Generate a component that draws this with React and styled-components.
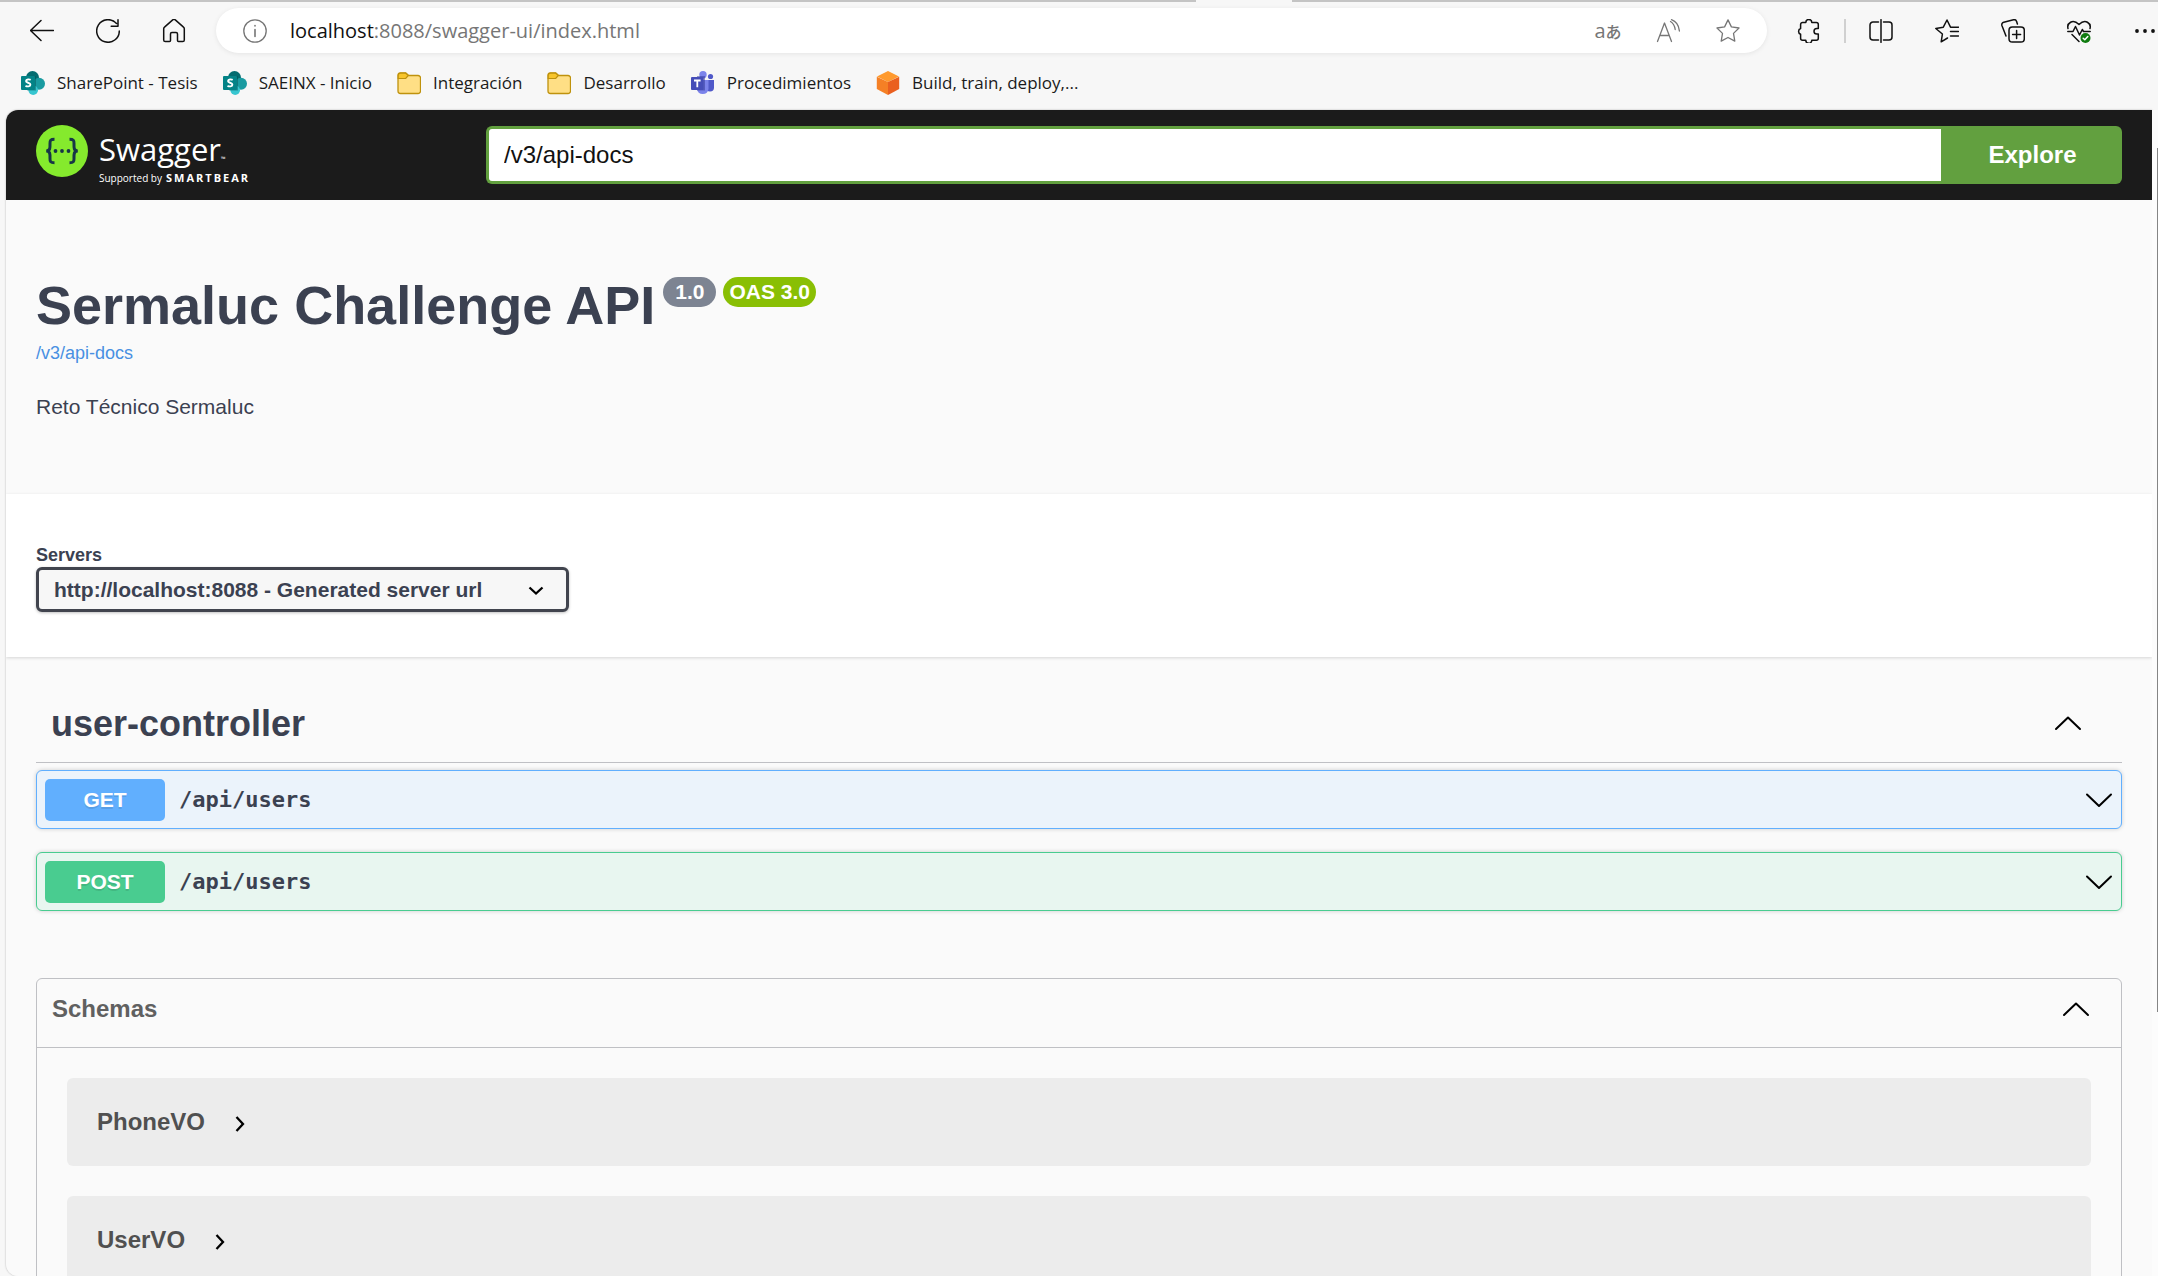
import React, { useState } from "react";
import styled, { createGlobalStyle } from "styled-components";

const UI = `"Open Sans", "Noto Sans", sans-serif`;
const SANS = `"Liberation Sans", Arial, sans-serif`;
const MONO = `"DejaVu Sans Mono", monospace`;

const GlobalStyle = createGlobalStyle`
  *, *::before, *::after { box-sizing: border-box; }
  body { margin: 0; background: #f7f7f7; }
  button { border: 0; background: none; padding: 0; font: inherit; color: inherit; cursor: pointer; }
  h1, h2, p { margin: 0; }
`;

const Browser = styled.div`
  display: flex;
  flex-direction: column;
  height: 100vh;
  overflow: hidden;
  background: #f7f7f7;
  font-family: ${UI};
`;

const TabEdge = styled.div`
  display: flex;
  flex: none;
  height: 2px;
`;

const EdgeLine = styled.div`
  flex: ${(p) => p.$grow} 1 0;
  background: #c4c4c4;
`;

const ActiveTabGap = styled.div`
  flex: none;
  width: 96px;
`;

const Toolbar = styled.div`
  display: flex;
  align-items: center;
  flex: none;
  gap: 22px;
  height: 57px;
  padding-left: 22px;
`;

const IconGroup = styled.div`
  display: flex;
  align-items: center;
  flex: none;
  gap: ${(p) => p.$gap}px;
  margin-right: ${(p) => (p.$bleed ? "-7px" : "0")};
`;

const IconButton = styled.button`
  display: flex;
  align-items: center;
  justify-content: center;
  width: 40px;
  height: 40px;
  color: ${(p) => (p.$muted ? "#767676" : "#111")};
`;

const TranslateLabel = styled.span`
  font: 20px/24px "Open Sans", "Noto Sans CJK JP", sans-serif;
`;

const Kana = styled.span`
  font: 500 16px/24px "Noto Sans CJK JP", sans-serif;
`;

const Separator = styled.span`
  width: 2px;
  height: 24px;
  margin: 0 15px;
  background: #d0d0d0;
`;

const AddressBar = styled.div`
  display: flex;
  align-items: center;
  flex: 1;
  min-width: 0;
  height: 45px;
  padding: 0 19px 0 27px;
  border-radius: 23px;
  background: #fff;
  box-shadow: 0 1px 5px rgba(0, 0, 0, 0.08);
`;

const Address = styled.div`
  flex: 1;
  min-width: 0;
  margin-left: 23px;
  overflow: hidden;
  white-space: nowrap;
  color: #767676;
  font-size: 20px;
  line-height: 28px;
  outline: 0;
`;

const Host = styled.span`
  color: #111;
`;

const Bookmarks = styled.nav`
  display: flex;
  align-items: center;
  flex: none;
  gap: 25px;
  height: 51px;
  padding: 0 21px 4px;
`;

const Bookmark = styled.a`
  display: flex;
  align-items: center;
  gap: 12px;
  color: #1b1b1b;
  font-size: 17px;
  line-height: 24px;
  text-decoration: none;
  white-space: nowrap;
`;

const Viewport = styled.div`
  display: flex;
  flex: 1;
  min-height: 0;
  padding-left: 6px;
`;

const Page = styled.div`
  flex: 1;
  min-width: 0;
  overflow-y: auto;
  scrollbar-width: none;
  border-radius: 12px 0 0 12px;
  background: #fafafa;
  box-shadow: 0 0 2px rgba(0, 0, 0, 0.3);
  color: #3b4151;
  font-family: ${SANS};
`;

const ScrollGutter = styled.div`
  display: flex;
  justify-content: flex-end;
  flex: none;
  width: 6px;
  padding: 38px 0 264px;
  background: #fcfcfc;
`;

const ScrollThumb = styled.div`
  width: 1px;
  background: #858585;
`;

const Topbar = styled.header`
  display: flex;
  align-items: center;
  height: 90px;
  padding: 0 30px;
  background: #1b1b1b;
`;

const LogoLink = styled.a`
  display: flex;
  flex: none;
  gap: 11px;
  width: 450px;
  height: 60px;
  color: #fff;
  font-family: "Open Sans", sans-serif;
  text-decoration: none;
`;

const LogoWords = styled.span`
  display: flex;
  flex-direction: column;
  padding-top: 3px;
`;

const LogoName = styled.span`
  font-size: 31px;
  line-height: 42px;
`;

const Trademark = styled.span`
  font-size: 6px;
  line-height: 6px;
`;

const LogoByline = styled.span`
  display: flex;
  align-items: center;
  gap: 4px;
  font-size: 10px;
  line-height: 16px;
`;

const Brand = styled.strong`
  font-size: 11px;
  font-weight: 700;
  letter-spacing: 2px;
`;

const SpecForm = styled.form`
  display: flex;
  flex: 1;
  height: 58px;
`;

const SpecInput = styled.input`
  flex: 1;
  min-width: 0;
  padding: 0 15px;
  border: 3px solid #62a03f;
  border-right: 0;
  border-radius: 6px 0 0 6px;
  background: #fff;
  color: #111;
  font: 24px ${SANS};
  outline: 0;
`;

const ExploreButton = styled.button`
  width: 181px;
  padding-left: 2px;
  border-radius: 0 6px 6px 0;
  background: #62a03f;
  color: #fff;
  font: bold 24px ${SANS};
`;

const Info = styled.section`
  padding: 75px 30px 72px;
`;

const TitleRow = styled.div`
  display: flex;
  align-items: flex-start;
  height: 64px;
`;

const Title = styled.h1`
  margin-right: 8px;
  font-size: 54px;
  line-height: 61px;
`;

const Version = styled.span`
  margin: 2px 7px 0 0;
  padding: 0 ${(p) => p.$pad}px;
  border-radius: 15px;
  background: ${(p) => p.$color};
  color: #fff;
  font-size: 21px;
  font-weight: bold;
  line-height: 30px;
`;

const DocsLink = styled.a`
  display: block;
  width: fit-content;
  color: #4990e2;
  font-size: 18px;
  line-height: 28px;
  text-decoration: none;
`;

const Description = styled.p`
  margin-top: 25px;
  font-size: 21px;
  line-height: 30px;
`;

const Servers = styled.section`
  display: flex;
  flex-direction: column;
  align-items: flex-start;
  gap: 2px;
  padding: 51px 30px 45px;
  background: #fff;
  box-shadow: 0 1px 3px rgba(0, 0, 0, 0.15);
`;

const ServersLabel = styled.label`
  font-size: 18px;
  font-weight: bold;
  line-height: 20px;
`;

const SelectBox = styled.div`
  display: grid;
  align-items: center;
  > * { grid-area: 1 / 1; }
  > svg { justify-self: end; margin-right: 21px; pointer-events: none; }
`;

const ServerSelect = styled.select`
  height: 45px;
  padding: 0 83px 0 15px;
  border: 3px solid #41444e;
  border-radius: 6px;
  background: #f7f7f7;
  box-shadow: 0 1px 3px rgba(0, 0, 0, 0.25);
  color: #3b4151;
  font: bold 21px ${SANS};
  appearance: none;
`;

const Operations = styled.section`
  padding: 30px 30px 67px;
`;

const TagHeader = styled.button`
  display: flex;
  align-items: flex-start;
  justify-content: space-between;
  width: 100%;
  margin-bottom: 7px;
  padding: 16px 39px 17px 15px;
  border-bottom: 1px solid #bfc0c4;
  > svg { margin-top: 6px; }
`;

const TagTitle = styled.h2`
  font-size: 36px;
  line-height: 42px;
`;

const OperationList = styled.div`
  display: flex;
  flex-direction: column;
  gap: 23px;
`;

const Operation = styled.button`
  display: flex;
  align-items: center;
  gap: 14px;
  width: 100%;
  padding: 8px 7px 7px 8px;
  border: 1px solid ${(p) => p.$color};
  border-radius: 6px;
  background: ${(p) => p.$tint};
  box-shadow: 0 0 4px rgba(0, 0, 0, 0.19);
  > svg { margin-left: auto; }
`;

const Method = styled.span`
  width: 120px;
  border-radius: 5px;
  background: ${(p) => p.$color};
  color: #fff;
  font-size: 21px;
  font-weight: bold;
  line-height: 42px;
  text-align: center;
  text-shadow: 0 2px 0 rgba(0, 0, 0, 0.1);
`;

const Path = styled.span`
  font: bold 22px/28px ${MONO};
`;

const Schemas = styled.section`
  margin: 0 30px 30px;
  border: 1px solid #bfc0c4;
  border-radius: 6px;
`;

const SchemasHeader = styled.button`
  display: flex;
  align-items: flex-start;
  justify-content: space-between;
  width: 100%;
  padding: 16px 30px 24px 15px;
  border-bottom: 1px solid #bfc0c4;
`;

const SchemasTitle = styled.h2`
  color: #606060;
  font-size: 24px;
  line-height: 28px;
`;

const Models = styled.div`
  display: flex;
  flex-direction: column;
  gap: 30px;
  padding: 30px;
`;

const Model = styled.div`
  padding: 30px;
  border-radius: 6px;
  background: #ececec;
`;

const ModelToggle = styled.button`
  display: flex;
  align-items: center;
  gap: 23px;
  color: #505050;
  font-size: 24px;
  font-weight: bold;
  line-height: 28px;
`;

const Icon = ({ size = 24, width = 1.3, children }) => (
  <svg width={size} height={size} viewBox="0 0 24 24" fill="none" stroke="currentColor" strokeWidth={width} strokeLinecap="round" strokeLinejoin="round" aria-hidden="true">
    {children}
  </svg>
);

const Chevron = ({ up }) => (
  <svg width="30" height="28" viewBox="0 0 30 28" fill="none" stroke="#000" strokeWidth="2" strokeLinecap="round" strokeLinejoin="round" aria-hidden="true">
    <path d={up ? "M3 20 15 8.500l12 11.500" : "M3 8.500l12 11.500 12-11.500"} />
  </svg>
);

const SmallChevron = ({ right }) => (
  <svg width="24" height="24" viewBox="0 0 24 24" fill="none" stroke="#000" strokeWidth="2.300" aria-hidden="true">
    <path d={right ? "M8.500 7l6.500 7-6.500 7" : "M5.500 9.500l6.500 6 6.500-6"} />
  </svg>
);

const SharePointIcon = () => (
  <svg width="24" height="24" viewBox="0 0 24 24" aria-hidden="true">
    <circle cx="11.500" cy="6.500" r="6.500" fill="#036c70" />
    <circle cx="18" cy="12.800" r="6" fill="#1a9ba1" />
    <circle cx="12.200" cy="19.200" r="4.800" fill="#37c6d0" />
    <path d="M6 5h9v14.500H6z" fill="#024e52" opacity=".45" />
    <rect y="5" width="14" height="14" rx="1" fill="#038387" />
    <path d="M9.700 8.900C8.500 8.200 5.200 8 5 10c-.1 2 4.500 1.500 4.400 3.800-.1 2-3.300 1.900-4.900 1" fill="none" stroke="#fff" strokeWidth="1.900" />
  </svg>
);

const FolderIcon = () => (
  <svg width="24" height="24" viewBox="0 0 24 24" aria-hidden="true">
    <path d="M1 4.500A2.500 2.500 0 0 1 3.500 2h5.200l3 2.500H21A2.500 2.500 0 0 1 23.500 7v13a2.500 2.500 0 0 1-2.500 2.500H3.500A2.500 2.500 0 0 1 1 20z" fill="#ffdf85" stroke="#bf920d" strokeWidth="1.300" />
    <path d="M1.200 7.500V4.500A2.300 2.300 0 0 1 3.500 2.200h5.200l2.600 2.300-2.600 3z" fill="#f8c52b" stroke="#bf920d" strokeWidth="1.200" />
  </svg>
);

const TeamsIcon = () => (
  <svg width="24" height="24" viewBox="0 0 24 24" aria-hidden="true">
    <circle cx="19.500" cy="5.500" r="2.600" fill="#5059c9" />
    <path d="M15 9h8v7.500a4 4 0 0 1-8 0z" fill="#5059c9" />
    <circle cx="12" cy="3.700" r="3.700" fill="#7b83eb" />
    <path d="M6 9h11.500v9a5.800 5.800 0 0 1-11.500 0z" fill="#7b83eb" />
    <path d="M6 5h8v14.500H6z" fill="#2f3591" opacity=".5" />
    <rect x="0" y="6" width="12.500" height="13" rx="1" fill="#464eb8" />
    <path d="M3 9.500h6.600M6.300 9.500v6.800" stroke="#fff" strokeWidth="1.800" />
  </svg>
);

const CubeIcon = () => (
  <svg width="24" height="24" viewBox="0 0 24 24" aria-hidden="true">
    <path d="M12 0 23 5.500 12 11 1 5.500z" fill="#ff9a2e" />
    <path d="M.8 5.800 12 11v13L.8 18z" fill="#f58025" />
    <path d="M23.200 5.800 12 11v13l11.200-6z" fill="#ea5f1f" />
  </svg>
);

const SwaggerMark = () => (
  <svg width="52" height="52" viewBox="0 0 52 52" aria-hidden="true">
    <circle cx="26" cy="26" r="26" fill="#85ea2d" />
    <g fill="none" stroke="#173647" strokeWidth="3">
      <path d="M18.500 14.300c-4 0-4.600 1.200-4.500 4.200.1 4.500.2 7.200-3.700 7.500 3.900.3 3.800 3 3.700 7.500-.1 3 .5 4.200 4.500 4.200" />
      <path d="M33.500 14.300c4 0 4.600 1.200 4.500 4.200-.1 4.500-.2 7.200 3.700 7.500-3.900.3-3.800 3-3.700 7.500.1 3-.5 4.200-4.500 4.200" />
    </g>
    <g fill="#173647">
      <circle cx="19.500" cy="26" r="1.900" />
      <circle cx="26" cy="26" r="1.900" />
      <circle cx="32.500" cy="26" r="1.900" />
    </g>
  </svg>
);

const bookmarks = [
  ["SharePoint - Tesis", SharePointIcon],
  ["SAEINX - Inicio", SharePointIcon],
  ["Integración", FolderIcon],
  ["Desarrollo", FolderIcon],
  ["Procedimientos", TeamsIcon],
  ["Build, train, deploy,...", CubeIcon],
];

const operations = [
  { method: "GET", path: "/api/users", color: "#61affe", tint: "#ebf3fb" },
  { method: "POST", path: "/api/users", color: "#49cc90", tint: "#e8f6f0" },
];

const STAR = "M12 .9l3.400 7 7.600 1.100-5.500 5.400 1.300 7.700-6.800-3.600-6.800 3.600 1.300-7.700L1 9l7.600-1.100z";

function BrowserChrome() {
  return (
    <>
      <TabEdge>
        <EdgeLine $grow={58} />
        <ActiveTabGap />
        <EdgeLine $grow={42} />
      </TabEdge>
      <Toolbar>
        <IconGroup $gap={26}>
          <IconButton aria-label="Back">
            <Icon width={1.500}><path d="M23.500 11.500H1M11 1.500l-10.500 10 10.500 10" /></Icon>
          </IconButton>
          <IconButton aria-label="Refresh">
            <Icon width={1.500}><path d="M20.500 4.500A11.300 11.300 0 1 0 23.300 12M22 .8v6.500h-6.800" /></Icon>
          </IconButton>
          <IconButton aria-label="Home">
            <Icon width={1.500}><path d="M1.700 9.800c0-.7.300-1.300.8-1.700l8.200-7.200c.8-.7 1.800-.7 2.600 0l8.200 7.200c.5.400.8 1 .8 1.700V21c0 .9-.7 1.600-1.600 1.600h-4.200c-.6 0-1-.4-1-1V15c0-.8-.6-1.400-1.400-1.400h-4.200c-.8 0-1.400.6-1.400 1.400v6.600c0 .6-.4 1-1 1H3.300c-.9 0-1.600-.7-1.600-1.600z" /></Icon>
          </IconButton>
        </IconGroup>
        <AddressBar>
          <Icon>
            <g stroke="#767676">
              <circle cx="12" cy="12" r="11.200" />
              <path d="M12 10.500v7M12 6.600v.3" strokeWidth="1.600" />
            </g>
          </Icon>
          <Address role="textbox" aria-label="Address" contentEditable suppressContentEditableWarning spellCheck={false}>
            <Host>localhost</Host>:8088/swagger-ui/index.html
          </Address>
          <IconGroup $gap={20}>
            <IconButton $muted aria-label="Translate">
              <TranslateLabel>a</TranslateLabel><Kana>あ</Kana>
            </IconButton>
            <IconButton $muted aria-label="Read aloud">
              <Icon><path d="M1.500 22.500 8.500 4l7 18.500M4 16.500h9M14.500 2.500c2.600 1.600 4.200 4.300 4.700 8M15.500.7c4.500 1.700 7.400 5.700 7.900 11.300" /></Icon>
            </IconButton>
            <IconButton $muted aria-label="Add to favorites"><Icon><path d={STAR} /></Icon></IconButton>
          </IconGroup>
        </AddressBar>
        <IconGroup $gap={0} $bleed>
          <IconButton aria-label="Extensions">
            <Icon width={1.500}><path d="M8.800 3.500a3 3 0 0 1 6 0h4.500a2 2 0 0 1 2 2v4h-1.500a2.600 2.600 0 0 0 0 5.600h1.500v4.200a2 2 0 0 1-2 2h-4.500a3 3 0 0 1-6 0H5.600a2 2 0 0 1-2-2v-4a3.100 3.100 0 0 1 0-5.800v-4a2 2 0 0 1 2-2z" /></Icon>
          </IconButton>
          <Separator />
          <IconGroup $gap={26}>
            <IconButton aria-label="Split screen">
              <Icon width={1.500}><path d="M12 .7v22.600M9.500 3H4a3 3 0 0 0-3 3v12a3 3 0 0 0 3 3h5.500M14.500 3H20a3 3 0 0 1 3 3v12a3 3 0 0 1-3 3h-5.500" /></Icon>
            </IconButton>
            <IconButton aria-label="Favorites">
              <Icon width={1.500}><path d="M12.500 19 6.200 22.800l1.200-7.800L.8 9.500l7.500-1.300L12 1l3.500 7.200H23.500M15.500 12.500h8M15.500 17h8" /></Icon>
            </IconButton>
            <IconButton aria-label="Collections">
              <Icon width={1.500}><rect x="8" y="8" width="15.300" height="15" rx="3.300" /><path d="M15.600 11.500v8M11.600 15.500h8M5 17 .9 6.500C.5 5 1.300 3.600 2.800 3.200L12.500.8c1.500-.4 2.700.3 3.100 1.800l.8 2.400" /></Icon>
            </IconButton>
            <IconButton aria-label="Browser essentials">
              <Icon width={1.500}>
                <path d="M1 9.500C-.3 4.500 5.500-.8 12 5.500 18.500-.8 24.300 4.500 23 9.500M.8 12.500H6l2.500-5 4 8.500 2.800-5.500 1.200 2h6.700M5 15.500l7 7" />
                <circle cx="18.500" cy="19" r="5" fill="#107c10" stroke="none" />
                <path d="m16.200 19.200 1.600 1.600 3-3.300" stroke="#fff" />
              </Icon>
            </IconButton>
            <IconButton aria-label="Settings and more">
              <Icon><g fill="currentColor" stroke="none"><circle cx="4" cy="12" r="1.900" /><circle cx="12" cy="12" r="1.900" /><circle cx="20" cy="12" r="1.900" /></g></Icon>
            </IconButton>
          </IconGroup>
        </IconGroup>
      </Toolbar>
      <Bookmarks aria-label="Bookmarks">
        {bookmarks.map(([label, Mark]) => (
          <Bookmark key={label} href="#"><Mark />{label}</Bookmark>
        ))}
      </Bookmarks>
    </>
  );
}

export default function App() {
  const [spec, setSpec] = useState("/v3/api-docs");
  return (
    <>
      <GlobalStyle />
      <Browser>
        <BrowserChrome />
        <Viewport>
          <Page>
            <Topbar>
              <LogoLink href="#">
                <SwaggerMark />
                <LogoWords>
                  <LogoName>Swagger<Trademark>™</Trademark></LogoName>
                  <LogoByline>Supported by <Brand>SMARTBEAR</Brand></LogoByline>
                </LogoWords>
              </LogoLink>
              <SpecForm onSubmit={(e) => e.preventDefault()}>
                <SpecInput aria-label="API definition URL" value={spec} onChange={(e) => setSpec(e.target.value)} />
                <ExploreButton type="submit">Explore</ExploreButton>
              </SpecForm>
            </Topbar>
            <main>
              <Info>
                <TitleRow>
                  <Title>Sermaluc Challenge API</Title>
                  <Version $color="#7d8492" $pad={12}>1.0</Version>
                  <Version $color="#89bf04" $pad={6}>OAS 3.0</Version>
                </TitleRow>
                <DocsLink href="#">/v3/api-docs</DocsLink>
                <Description>Reto Técnico Sermaluc</Description>
              </Info>
              <Servers>
                <ServersLabel htmlFor="servers">Servers</ServersLabel>
                <SelectBox>
                  <ServerSelect id="servers">
                    <option>http://localhost:8088 - Generated server url</option>
                  </ServerSelect>
                  <SmallChevron />
                </SelectBox>
              </Servers>
              <Operations>
                <TagHeader aria-expanded="true">
                  <TagTitle>user-controller</TagTitle>
                  <Chevron up />
                </TagHeader>
                <OperationList>
                  {operations.map((op) => (
                    <Operation key={op.method} $color={op.color} $tint={op.tint} aria-expanded="false">
                      <Method $color={op.color}>{op.method}</Method>
                      <Path>{op.path}</Path>
                      <Chevron />
                    </Operation>
                  ))}
                </OperationList>
              </Operations>
              <Schemas>
                <SchemasHeader aria-expanded="true">
                  <SchemasTitle>Schemas</SchemasTitle>
                  <Chevron up />
                </SchemasHeader>
                <Models>
                  {["PhoneVO", "UserVO"].map((name) => (
                    <Model key={name}>
                      <ModelToggle aria-expanded="false">{name}<SmallChevron right /></ModelToggle>
                    </Model>
                  ))}
                </Models>
              </Schemas>
            </main>
          </Page>
          <ScrollGutter><ScrollThumb /></ScrollGutter>
        </Viewport>
      </Browser>
    </>
  );
}
